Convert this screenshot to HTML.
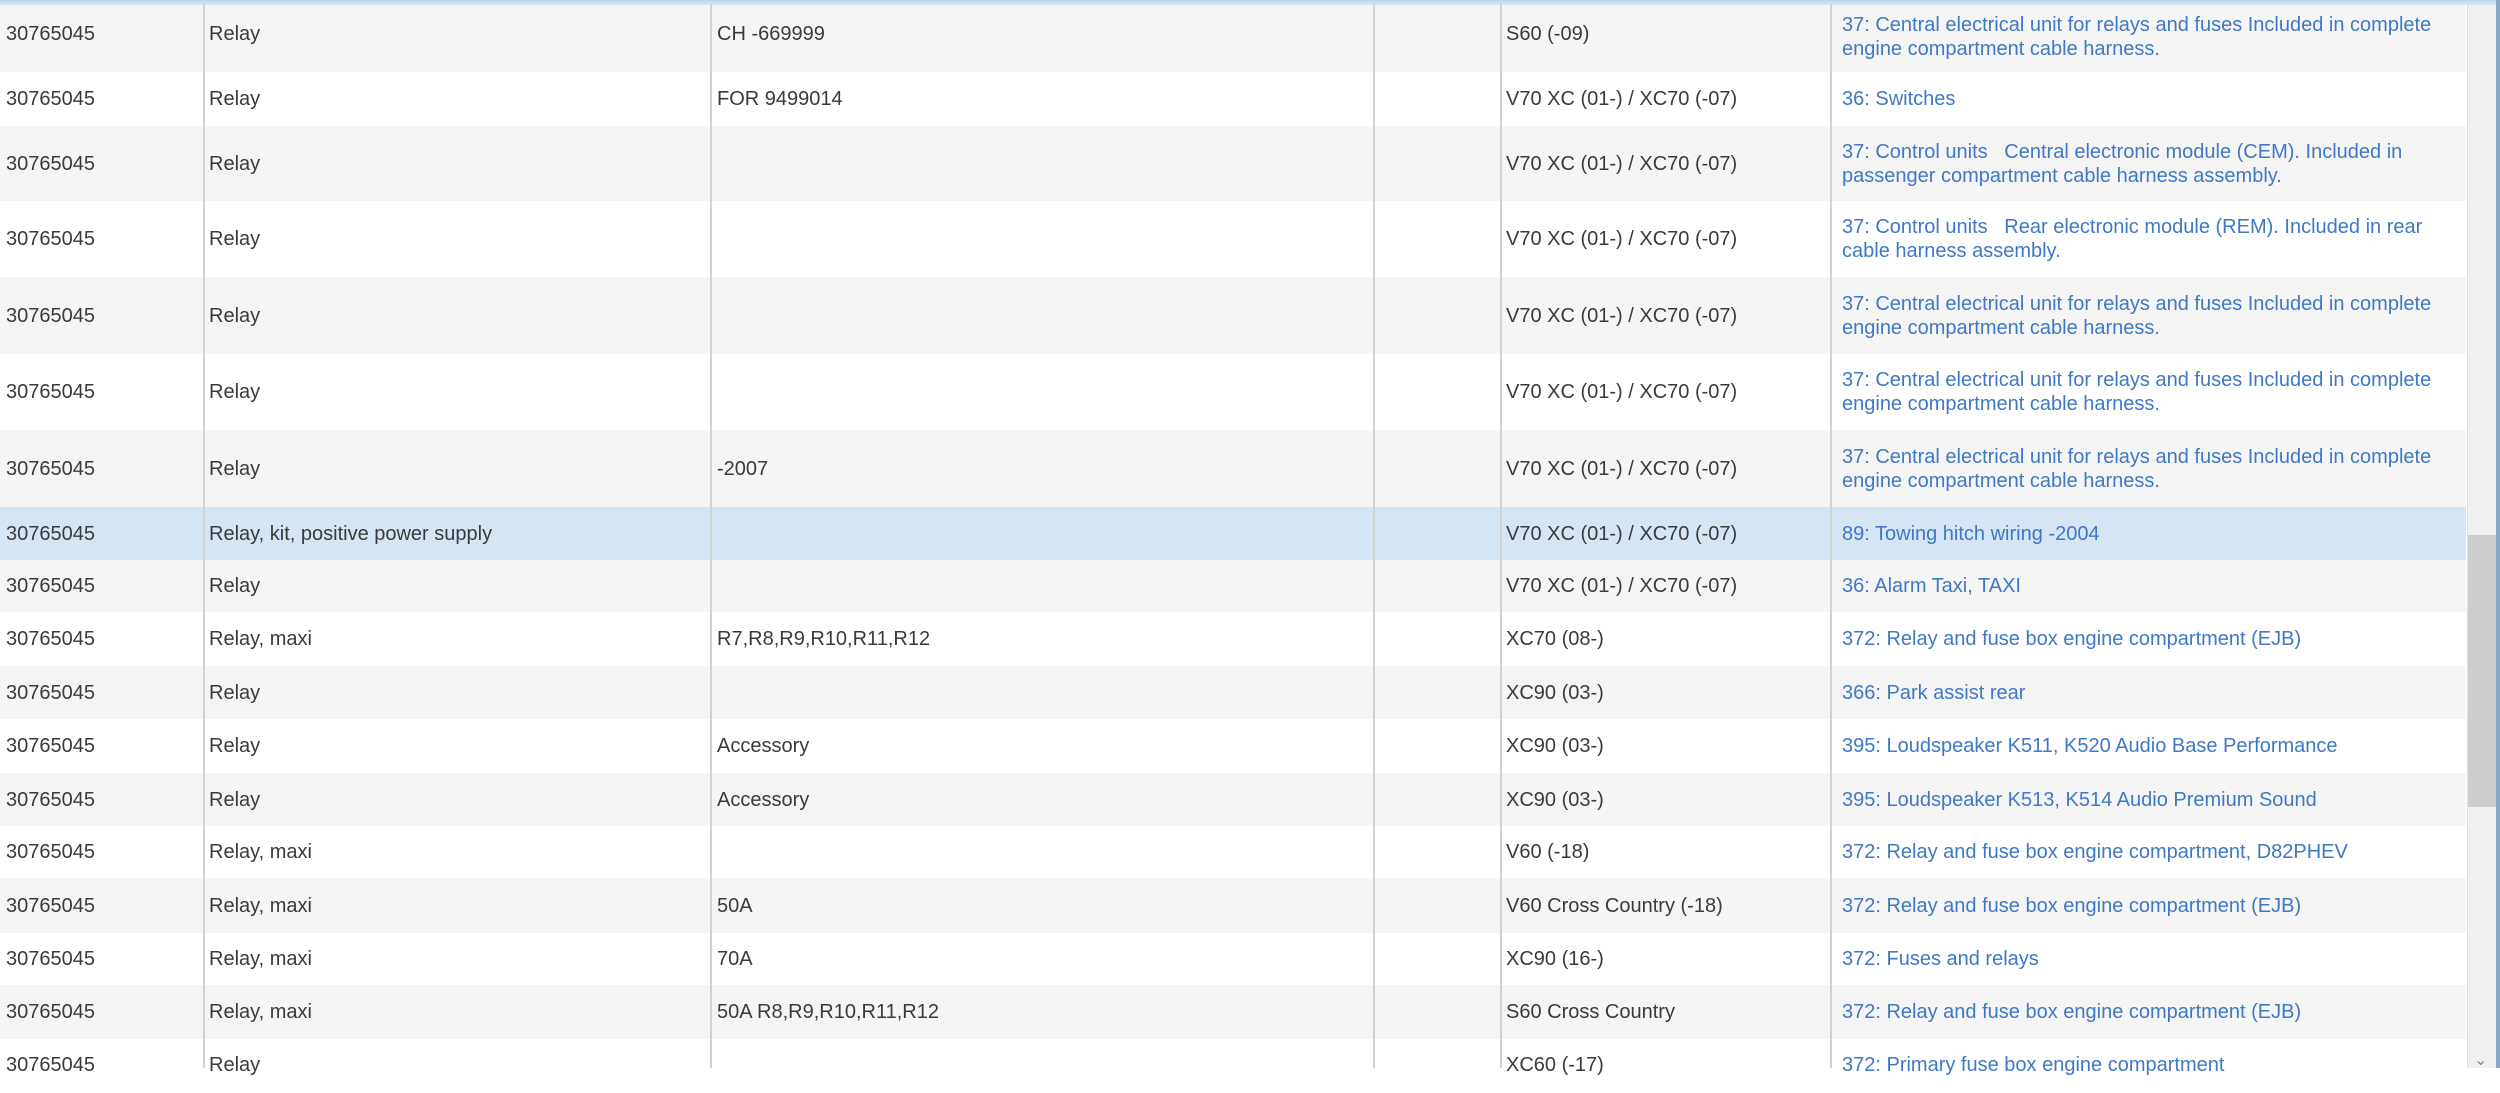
<!DOCTYPE html>
<html><head><meta charset="utf-8"><style>
*{margin:0;padding:0;box-sizing:border-box}
body{width:2500px;height:1068px;overflow:hidden;background:#fff;font-family:"Liberation Sans",Arial,sans-serif;font-size:20px;color:#3a3a3a;position:relative}
.row{position:absolute;left:0;width:2466px}
.g{background:#f5f5f5}.w{background:#fff}.h{background:#d5e5f3}
.c{position:absolute;top:0;height:100%;display:flex;align-items:center;line-height:24px;white-space:nowrap}
.c1{left:6px}.c2{left:209px}.c3{left:717px}.c5{left:1506px}.c6{left:1842px;color:#3f78c6}
.vl{position:absolute;top:4px;bottom:0;width:2px;background:#d2d2d2}
#top{position:absolute;left:0;top:0;width:2500px;height:5px;background:linear-gradient(#bdd3e8,#dde8f2)}
#sb{position:absolute;left:2467px;top:5px;width:33px;height:1063px;background:#f0f0f0;border-left:1px solid #ddd}
#th{position:absolute;left:2468px;top:535px;width:28px;height:272px;background:#cdcdcd}
#rb{position:absolute;left:2496px;top:0;width:4px;height:1068px;background:#8aa9c8}
#arr{position:absolute;left:2474px;top:1050px;font-size:16px;color:#888}
.r1 .c{padding-bottom:10px}
</style></head><body>
<div id="top"></div>

<div class="row g r1" style="top:5px;height:67px"><div class="c c1">30765045</div><div class="c c2">Relay</div><div class="c c3">CH -669999</div><div class="c c5">S60 (-09)</div><div class="c c6" style="padding-bottom:4px">37: Central electrical unit for relays and fuses Included in complete<br>engine compartment cable harness.</div></div>
<div class="row w" style="top:72px;height:54px"><div class="c c1">30765045</div><div class="c c2">Relay</div><div class="c c3">FOR 9499014</div><div class="c c5">V70 XC (01-) / XC70 (-07)</div><div class="c c6">36: Switches</div></div>
<div class="row g" style="top:126px;height:75px"><div class="c c1">30765045</div><div class="c c2">Relay</div><div class="c c5">V70 XC (01-) / XC70 (-07)</div><div class="c c6">37: Control units &nbsp; Central electronic module (CEM). Included in<br>passenger compartment cable harness assembly.</div></div>
<div class="row w" style="top:201px;height:76px"><div class="c c1">30765045</div><div class="c c2">Relay</div><div class="c c5">V70 XC (01-) / XC70 (-07)</div><div class="c c6">37: Control units &nbsp; Rear electronic module (REM). Included in rear<br>cable harness assembly.</div></div>
<div class="row g" style="top:277px;height:77px"><div class="c c1">30765045</div><div class="c c2">Relay</div><div class="c c5">V70 XC (01-) / XC70 (-07)</div><div class="c c6">37: Central electrical unit for relays and fuses Included in complete<br>engine compartment cable harness.</div></div>
<div class="row w" style="top:354px;height:76px"><div class="c c1">30765045</div><div class="c c2">Relay</div><div class="c c5">V70 XC (01-) / XC70 (-07)</div><div class="c c6">37: Central electrical unit for relays and fuses Included in complete<br>engine compartment cable harness.</div></div>
<div class="row g" style="top:430px;height:77px"><div class="c c1">30765045</div><div class="c c2">Relay</div><div class="c c3">-2007</div><div class="c c5">V70 XC (01-) / XC70 (-07)</div><div class="c c6">37: Central electrical unit for relays and fuses Included in complete<br>engine compartment cable harness.</div></div>
<div class="row h" style="top:507px;height:53px"><div class="c c1">30765045</div><div class="c c2">Relay, kit, positive power supply</div><div class="c c5">V70 XC (01-) / XC70 (-07)</div><div class="c c6">89: Towing hitch wiring -2004</div></div>
<div class="row g" style="top:560px;height:52px"><div class="c c1">30765045</div><div class="c c2">Relay</div><div class="c c5">V70 XC (01-) / XC70 (-07)</div><div class="c c6">36: Alarm Taxi, TAXI</div></div>
<div class="row w" style="top:612px;height:54px"><div class="c c1">30765045</div><div class="c c2">Relay, maxi</div><div class="c c3">R7,R8,R9,R10,R11,R12</div><div class="c c5">XC70 (08-)</div><div class="c c6">372: Relay and fuse box engine compartment (EJB)</div></div>
<div class="row g" style="top:666px;height:53px"><div class="c c1">30765045</div><div class="c c2">Relay</div><div class="c c5">XC90 (03-)</div><div class="c c6">366: Park assist rear</div></div>
<div class="row w" style="top:719px;height:54px"><div class="c c1">30765045</div><div class="c c2">Relay</div><div class="c c3">Accessory</div><div class="c c5">XC90 (03-)</div><div class="c c6">395: Loudspeaker K511, K520 Audio Base Performance</div></div>
<div class="row g" style="top:773px;height:53px"><div class="c c1">30765045</div><div class="c c2">Relay</div><div class="c c3">Accessory</div><div class="c c5">XC90 (03-)</div><div class="c c6">395: Loudspeaker K513, K514 Audio Premium Sound</div></div>
<div class="row w" style="top:826px;height:52px"><div class="c c1">30765045</div><div class="c c2">Relay, maxi</div><div class="c c5">V60 (-18)</div><div class="c c6">372: Relay and fuse box engine compartment, D82PHEV</div></div>
<div class="row g" style="top:878px;height:55px"><div class="c c1">30765045</div><div class="c c2">Relay, maxi</div><div class="c c3">50A</div><div class="c c5">V60 Cross Country (-18)</div><div class="c c6">372: Relay and fuse box engine compartment (EJB)</div></div>
<div class="row w" style="top:933px;height:52px"><div class="c c1">30765045</div><div class="c c2">Relay, maxi</div><div class="c c3">70A</div><div class="c c5">XC90 (16-)</div><div class="c c6">372: Fuses and relays</div></div>
<div class="row g" style="top:985px;height:54px"><div class="c c1">30765045</div><div class="c c2">Relay, maxi</div><div class="c c3">50A R8,R9,R10,R11,R12</div><div class="c c5">S60 Cross Country</div><div class="c c6">372: Relay and fuse box engine compartment (EJB)</div></div>
<div class="row w" style="top:1039px;height:54px"><div class="c c1" style="align-items:flex-start;padding-top:14px">30765045</div><div class="c c2" style="align-items:flex-start;padding-top:14px">Relay</div><div class="c c5" style="align-items:flex-start;padding-top:14px">XC60 (-17)</div><div class="c c6" style="align-items:flex-start;padding-top:14px">372: Primary fuse box engine compartment</div></div>

<div class="vl" style="left:203px"></div>
<div class="vl" style="left:710px"></div>
<div class="vl" style="left:1373px"></div>
<div class="vl" style="left:1500px"></div>
<div class="vl" style="left:1830px"></div>

<div id="sb"></div><div id="th"></div><div id="rb"></div>
<div id="arr">&#8964;</div>
</body></html>
